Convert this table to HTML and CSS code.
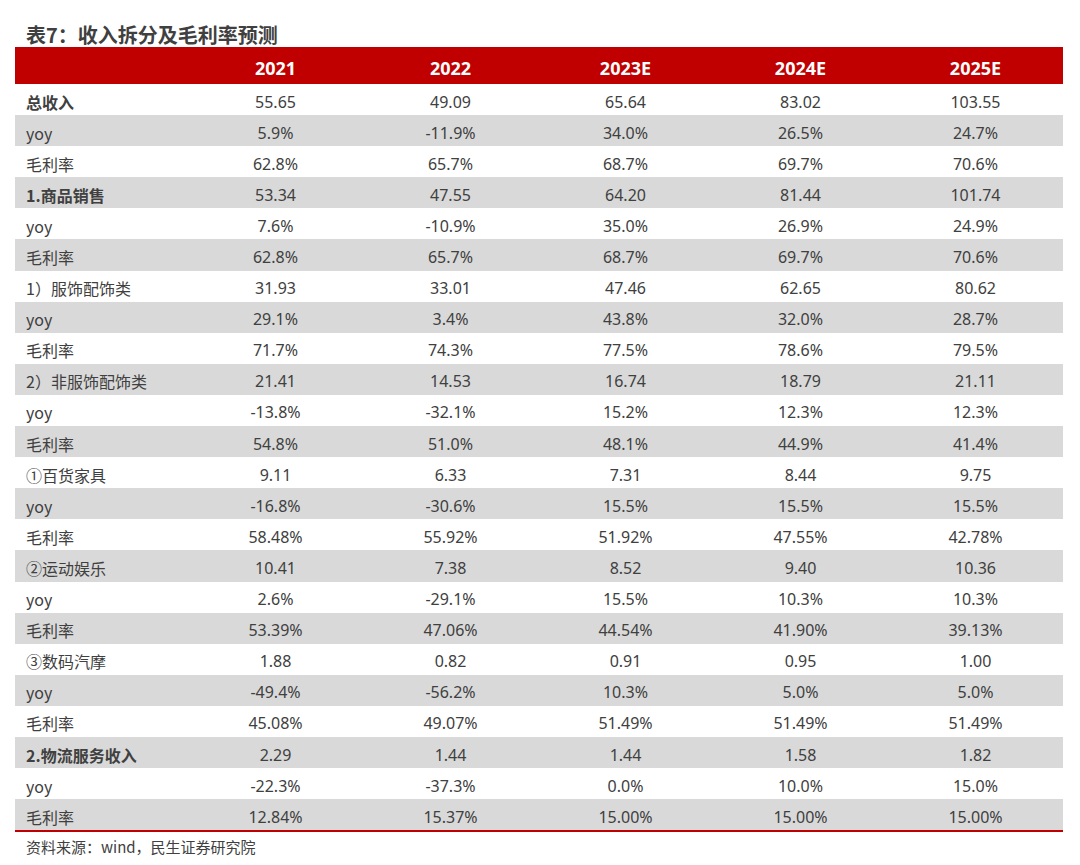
FILE: index.html
```html
<!DOCTYPE html>
<html lang="zh">
<head>
<meta charset="utf-8">
<title>表7</title>
<link rel="stylesheet" href="styles.css">
</head>
<body>
<div class="page">
  <h1 class="title">表7：收入拆分及毛利率预测</h1>
  <div class="table">
    <div class="row head"><div class="label"></div><div>2021</div><div>2022</div><div>2023E</div><div>2024E</div><div>2025E</div></div>
    <div class="row"><div class="label bold">总收入</div><div>55.65</div><div>49.09</div><div>65.64</div><div>83.02</div><div>103.55</div></div>
    <div class="row alt"><div class="label">yoy</div><div>5.9%</div><div>-11.9%</div><div>34.0%</div><div>26.5%</div><div>24.7%</div></div>
    <div class="row"><div class="label">毛利率</div><div>62.8%</div><div>65.7%</div><div>68.7%</div><div>69.7%</div><div>70.6%</div></div>
    <div class="row alt"><div class="label bold">1.商品销售</div><div>53.34</div><div>47.55</div><div>64.20</div><div>81.44</div><div>101.74</div></div>
    <div class="row"><div class="label">yoy</div><div>7.6%</div><div>-10.9%</div><div>35.0%</div><div>26.9%</div><div>24.9%</div></div>
    <div class="row alt"><div class="label">毛利率</div><div>62.8%</div><div>65.7%</div><div>68.7%</div><div>69.7%</div><div>70.6%</div></div>
    <div class="row"><div class="label">1）服饰配饰类</div><div>31.93</div><div>33.01</div><div>47.46</div><div>62.65</div><div>80.62</div></div>
    <div class="row alt"><div class="label">yoy</div><div>29.1%</div><div>3.4%</div><div>43.8%</div><div>32.0%</div><div>28.7%</div></div>
    <div class="row"><div class="label">毛利率</div><div>71.7%</div><div>74.3%</div><div>77.5%</div><div>78.6%</div><div>79.5%</div></div>
    <div class="row alt"><div class="label">2）非服饰配饰类</div><div>21.41</div><div>14.53</div><div>16.74</div><div>18.79</div><div>21.11</div></div>
    <div class="row"><div class="label">yoy</div><div>-13.8%</div><div>-32.1%</div><div>15.2%</div><div>12.3%</div><div>12.3%</div></div>
    <div class="row alt"><div class="label">毛利率</div><div>54.8%</div><div>51.0%</div><div>48.1%</div><div>44.9%</div><div>41.4%</div></div>
    <div class="row"><div class="label">①百货家具</div><div>9.11</div><div>6.33</div><div>7.31</div><div>8.44</div><div>9.75</div></div>
    <div class="row alt"><div class="label">yoy</div><div>-16.8%</div><div>-30.6%</div><div>15.5%</div><div>15.5%</div><div>15.5%</div></div>
    <div class="row"><div class="label">毛利率</div><div>58.48%</div><div>55.92%</div><div>51.92%</div><div>47.55%</div><div>42.78%</div></div>
    <div class="row alt"><div class="label">②运动娱乐</div><div>10.41</div><div>7.38</div><div>8.52</div><div>9.40</div><div>10.36</div></div>
    <div class="row"><div class="label">yoy</div><div>2.6%</div><div>-29.1%</div><div>15.5%</div><div>10.3%</div><div>10.3%</div></div>
    <div class="row alt"><div class="label">毛利率</div><div>53.39%</div><div>47.06%</div><div>44.54%</div><div>41.90%</div><div>39.13%</div></div>
    <div class="row"><div class="label">③数码汽摩</div><div>1.88</div><div>0.82</div><div>0.91</div><div>0.95</div><div>1.00</div></div>
    <div class="row alt"><div class="label">yoy</div><div>-49.4%</div><div>-56.2%</div><div>10.3%</div><div>5.0%</div><div>5.0%</div></div>
    <div class="row"><div class="label">毛利率</div><div>45.08%</div><div>49.07%</div><div>51.49%</div><div>51.49%</div><div>51.49%</div></div>
    <div class="row alt"><div class="label bold">2.物流服务收入</div><div>2.29</div><div>1.44</div><div>1.44</div><div>1.58</div><div>1.82</div></div>
    <div class="row"><div class="label">yoy</div><div>-22.3%</div><div>-37.3%</div><div>0.0%</div><div>10.0%</div><div>15.0%</div></div>
    <div class="row alt last"><div class="label">毛利率</div><div>12.84%</div><div>15.37%</div><div>15.00%</div><div>15.00%</div><div>15.00%</div></div>
  </div>
  <p class="source">资料来源：wind，民生证券研究院</p>
</div>
</body>
</html>
```

FILE: styles.css
```css
html, body {
  margin: 0;
  padding: 0;
  background: #ffffff;
}

.page {
  font-family: "Noto Sans", "Noto Sans CJK SC", sans-serif;
  color: #404040;
  padding-top: 23px;
}

.title {
  margin: 0 0 0 26px;
  font-size: 20px;
  line-height: 24px;
  font-weight: 700;
  color: #404040;
  font-family: "Noto Sans CJK SC", sans-serif;
}

.table {
  margin: 0 0 0 15px;
  width: 1048px;
  border-bottom: 2px solid #c00000;
}

.row {
  display: grid;
  grid-template-columns: 173px repeat(5, 175px);
  height: 31.1px;
  align-items: center;
  font-size: 16px;
}

.row > div {
  text-align: center;
  white-space: nowrap;
  padding-top: 4px;
}

.row .label {
  text-align: left;
  padding-left: 11px;
  font-family: "Noto Sans CJK SC", sans-serif;
}

.row .bold {
  font-weight: 700;
}

.row.alt {
  background: #d9d9d9;
}

.row.head {
  background: #c00000;
  color: #ffffff;
  font-weight: 700;
  font-size: 18px;
  height: 37px;
}

.row.head > div {
  padding-top: 5px;
}

.source {
  margin: 5px 0 0 26px;
  font-size: 15px;
  line-height: 20px;
  font-family: "Noto Sans CJK SC", sans-serif;
  color: #404040;
}
```
